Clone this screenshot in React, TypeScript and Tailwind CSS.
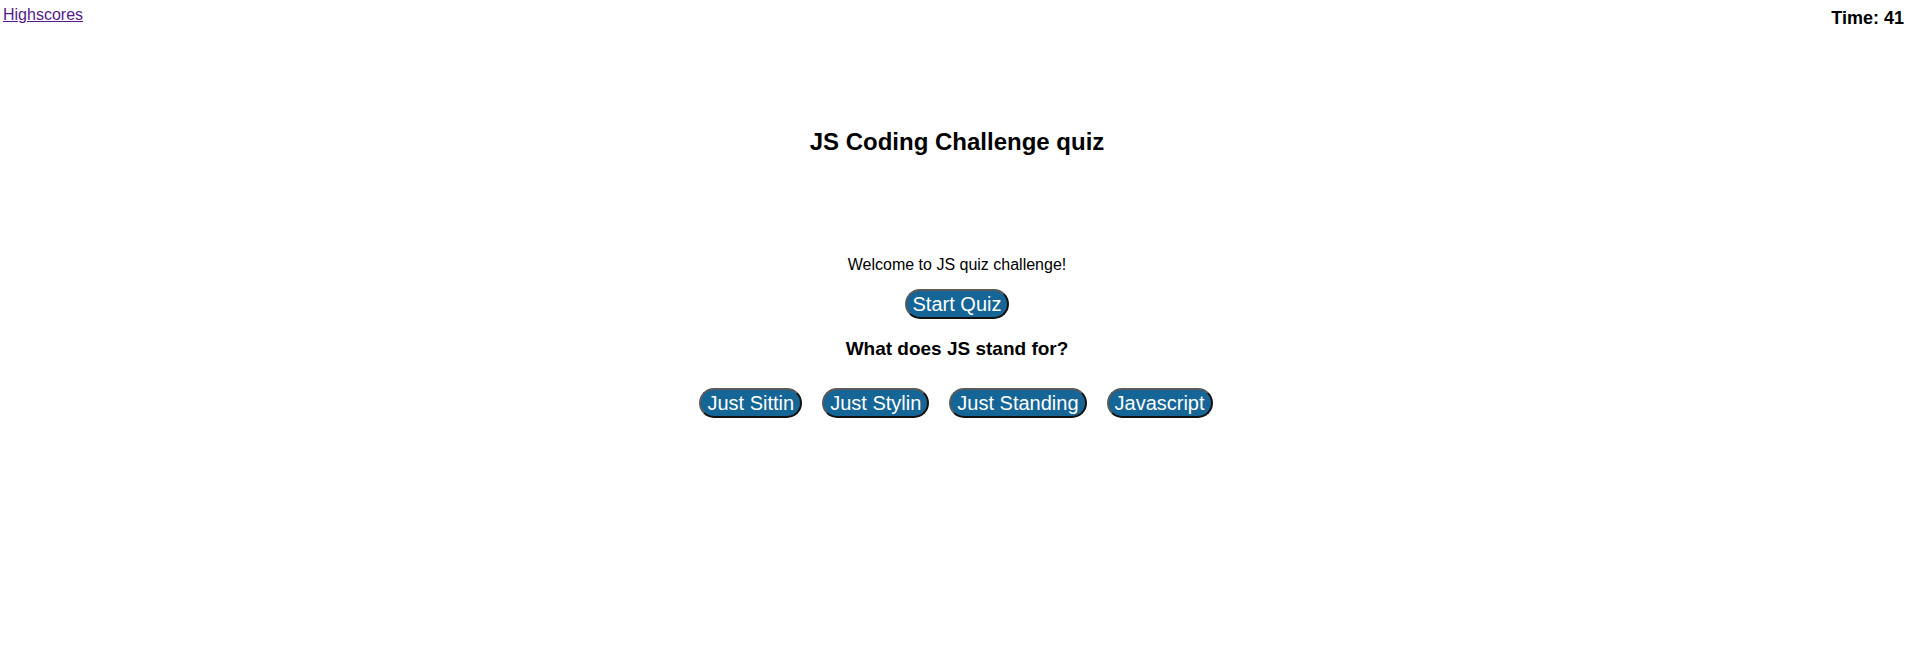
import React from 'react';

const ANSWERS = ['Just Sittin', 'Just Stylin', 'Just Standing', 'Javascript'];

const btn =
  "rounded-full bg-[#156596] text-white text-[20px] leading-[24px] px-[6px] py-[1px] border-2 border-t-[#5a5a5a] border-l-[#5a5a5a] border-r-[#111] border-b-[#111]";

export default function App() {
  return (
    <div className="min-h-screen bg-white text-black font-['Liberation_Sans',Arial,sans-serif]">
      <header className="flex justify-between items-start">
        <a href="#" className="text-[16px] text-[#551a8b] underline pl-[3px] pt-[3px]">
          Highscores
        </a>
        <div className="text-[18px] font-bold pr-[10px] pt-[5px]">Time: 41</div>
      </header>

      <main className="flex flex-col items-center">
        <h1 className="text-[24px] font-bold mt-[92px]">JS Coding Challenge quiz</h1>
        <p className="text-[16px] mt-[93px]">Welcome to JS quiz challenge!</p>
        <button className={`${btn} mt-[12px]`}>Start Quiz</button>
        <h3 className="text-[19px] font-bold mt-[16px]">What does JS stand for?</h3>
        <div className="flex gap-[20px] mt-[24px] -ml-[2px]">
          {ANSWERS.map((a) => (
            <button key={a} className={btn}>
              {a}
            </button>
          ))}
        </div>
      </main>
    </div>
  );
}
